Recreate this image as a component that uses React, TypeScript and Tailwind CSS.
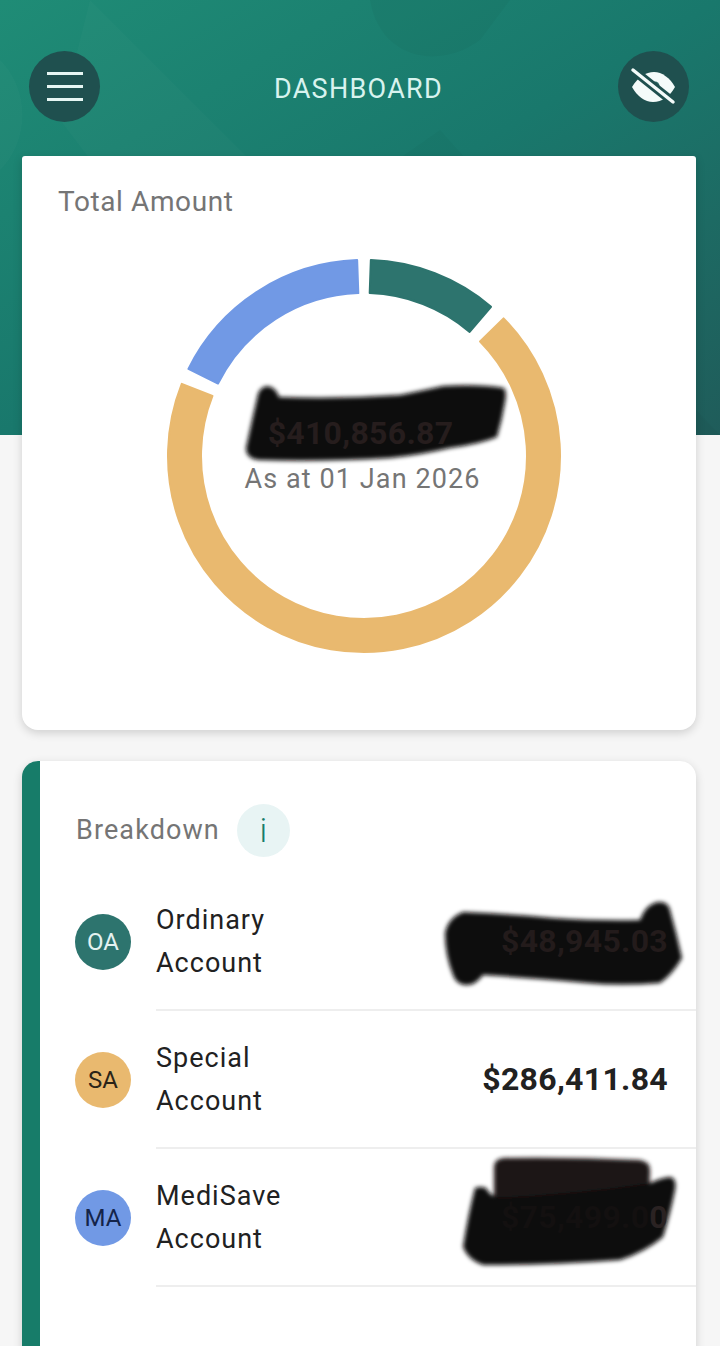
const R_OUT = 196;
const R_IN = 163;
const C = 200;

function pt(r: number, deg: number): string {
  const a = ((deg - 90) * Math.PI) / 180;
  return `${(C + r * Math.cos(a)).toFixed(2)} ${(C + r * Math.sin(a)).toFixed(2)}`;
}

function arc(start: number, end: number): string {
  const large = end - start > 180 ? 1 : 0;
  return `M${pt(R_OUT, start)} A${R_OUT} ${R_OUT} 0 ${large} 1 ${pt(R_OUT, end)} L${pt(R_IN, end)} A${R_IN} ${R_IN} 0 ${large} 0 ${pt(R_IN, start)} Z`;
}

function Ring() {
  const segs = [
    { s: 2.0, e: 40.4, c: "#2d746e" },
    { s: 45.4, e: 291.6, c: "#e9b96f" },
    { s: 296.4, e: 358.0, c: "#7199e5" },
  ];
  return (
    <svg width="400" height="400" viewBox="0 0 400 400">
      {segs.map((g) => (
        <path key={g.c} d={arc(g.s, g.e)} fill={g.c} stroke={g.c} strokeWidth="2" strokeLinejoin="round" />
      ))}
    </svg>
  );
}

function Scribbles() {
  return (
    <svg className="absolute left-0 top-0 pointer-events-none" width="720" height="1346" viewBox="0 0 720 1346">
      <defs>
        <filter id="blur" x="-10%" y="-10%" width="120%" height="120%">
          <feGaussianBlur stdDeviation="2.2" />
        </filter>
      </defs>
      <g filter="url(#blur)">
        <path
          d="M246 448 Q252 420 258 394 Q262 384 271 387 Q277 390 279 397 Q340 399 400 395 Q425 390 443 386 Q480 384 504 388 Q507 392 505 402 Q502 420 497 437 Q480 444 450 448 Q420 455 390 458 Q320 462 258 460 Q246 458 246 448Z"
          fill="#0c0a0a"
        />
        <path
          d="M445 933 Q448 918 463 912 Q510 914 553 918 Q600 921 640 920 Q646 904 658 902 Q668 901 670 910 Q677 935 682 958 Q672 975 660 983 Q620 986 587 983 Q530 978 483 975 Q475 986 465 985 Q456 984 453 975 Q445 955 445 933Z"
          fill="#0d0a0a"
        />
        <path d="M494 1200 L494 1166 Q495 1159 503 1158 Q570 1157 640 1160 Q650 1162 650 1170 L649 1200Z" fill="#1b1212" />
        <path
          d="M475 1188 Q480 1186 486 1188 Q490 1196 500 1198 Q580 1194 648 1184 Q660 1178 670 1177 Q677 1178 675 1190 Q670 1215 663 1237 Q645 1252 620 1260 Q550 1265 483 1265 Q468 1260 463 1247 Q468 1215 475 1188Z"
          fill="#0d0a0a"
        />
      </g>
    </svg>
  );
}

const rows = [
  { code: "OA", bg: "bg-[#2d746e]", fg: "text-[#e4f2f0]", a: "Ordinary", v1: "$48,945.03", v2: "", vc: "text-[#231b1b]" },
  { code: "SA", bg: "bg-[#e9b96f]", fg: "text-[#2b2418]", a: "Special", v1: "$286,411.84", v2: "", vc: "text-[#212121]" },
  { code: "MA", bg: "bg-[#7199e5]", fg: "text-[#14244a]", a: "MediSave", v1: "$75,499.0", v2: "0", vc: "text-[#131010]" },
];

export default function App() {
  return (
    <div className="relative w-[720px] h-[1346px] overflow-hidden bg-[#f6f6f6] font-['Roboto',sans-serif]">
      <div className="relative h-[435px] -mb-[279px] overflow-hidden bg-gradient-to-br from-[#1f8c76] via-[#19786c] to-[#1f5c5a]">
        <svg className="absolute left-0 top-0" width="720" height="435" viewBox="0 0 720 435">
          <path d="M90 0 L330 240 L460 435 L300 435 L60 120 Z" fill="#ffffff" opacity="0.018" />
          <path d="M370 0 C380 60 440 70 480 40 L510 0 Z" fill="#000000" opacity="0.03" />
          <path d="M340 200 L440 130 L620 330 L720 435 L420 435 Z" fill="#000000" opacity="0.025" />
          <path d="M0 60 C30 90 30 140 0 170 Z" fill="#ffffff" opacity="0.02" />
        </svg>
        <div className="relative flex items-start justify-between pt-[51px] px-[31px] pl-[29px]">
          <button className="flex h-[71px] w-[71px] flex-col items-center justify-center gap-[10px] rounded-full bg-[#1f504f]">
            <span className="block h-[3px] w-[36px] bg-[#e6f6f3]" />
            <span className="block h-[3px] w-[36px] bg-[#e6f6f3]" />
            <span className="block h-[3px] w-[36px] bg-[#e6f6f3]" />
          </button>
          <h1 className="mt-[19px] -ml-[1px] text-[27px] leading-[38px] font-normal tracking-[1.3px] text-[#d8f3ee]">DASHBOARD</h1>
          <button className="h-[71px] w-[71px] rounded-full bg-[#1f504f]">
            <svg width="71" height="71" viewBox="0 0 71 71">
              <path d="M14 36 C20 26 28 21 36 21 C44 21 52 27 57 36 C52 45 44 51 35 51 C27 51 19 45 14 36Z" fill="#f4fbfa" />
              <circle cx="37" cy="35" r="4.5" fill="#2b6a66" />
              <path d="M15 19 L55 51" stroke="#1f504f" strokeWidth="9" />
              <path d="M15 19 L55 51" stroke="#f4fbfa" strokeWidth="3.5" strokeLinecap="round" />
            </svg>
          </button>
        </div>
      </div>

      <main className="relative flex flex-col gap-[31px] px-[24px] pl-[22px]">
        <section className="h-[574px] rounded-t-[3px] rounded-b-[16px] bg-white pt-[26px] shadow-[0_3px_10px_rgba(0,0,0,0.16)]">
          <h2 className="pl-[36px] text-[28px] leading-[40px] font-normal tracking-[0.6px] text-[#757575]">Total Amount</h2>
          <div className="relative ml-[142px] mt-[34px] h-[400px] w-[400px]">
            <Ring />
            <div className="absolute inset-0 z-10 flex flex-col items-center justify-center">
              <span className="relative z-10 text-[32px] leading-[45px] tracking-[0.3px] font-bold text-[#261d1d] -ml-[7px]">$410,856.87</span>
              <span className="mt-[1px] text-[27px] leading-[45px] tracking-[1.1px] text-[#757575] -ml-[3px]">As at 01 Jan 2026</span>
            </div>
          </div>
        </section>

        <section className="h-[640px] overflow-hidden rounded-t-[16px] border-l-[18px] border-[#177c69] bg-white shadow-[0_3px_10px_rgba(0,0,0,0.16)]">
          <div className="flex h-[112px] items-center pt-[26px] pl-[36px]">
            <h2 className="text-[27px] leading-[40px] font-normal tracking-[1.1px] text-[#757575]">Breakdown</h2>
            <span className="ml-[17px] flex h-[53px] w-[53px] items-center justify-center rounded-full bg-[#e8f4f4] text-[34px] font-light text-[#177c69]">
              i
            </span>
          </div>
          {rows.map((r) => (
            <div key={r.code} className="flex items-center pl-[35px]">
              <span className={`flex h-[56px] w-[56px] shrink-0 items-center justify-center rounded-full text-[24px] ${r.bg} ${r.fg}`}>
                {r.code}
              </span>
              <div className="ml-[25px] flex h-[138px] flex-1 items-center justify-between border-b-2 border-[#eeeeee] pr-[28px]">
                <div className="pt-[2px] text-[27px] leading-[43px] tracking-[1px] text-[#212121]">
                  <div>{r.a}</div>
                  <div>Account</div>
                </div>
                <span className={`relative z-10 text-[32px] tracking-[0.3px] font-bold ${r.vc}`}>
                  {r.v1}
                  {r.v2 && <span className="text-[#2a2222]">{r.v2}</span>}
                </span>
              </div>
            </div>
          ))}
        </section>
      </main>
      <Scribbles />
    </div>
  );
}
